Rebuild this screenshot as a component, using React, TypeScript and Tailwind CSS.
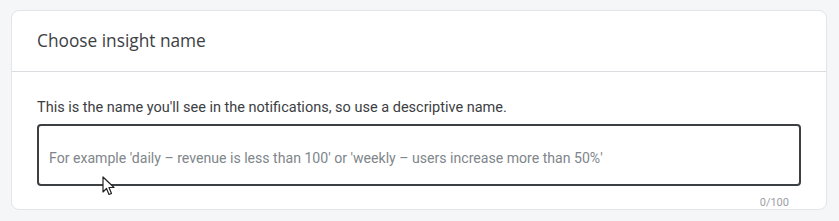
export default function App() {
  return (
    <div className="w-[839px] h-[221px] bg-[#f5f6f8] pt-[10px] pl-[11px] pr-[12px] relative" style={{ fontFamily: 'Roboto, "Open Sans", sans-serif' }}>
      <div className="bg-white border border-[#e3e5e8] rounded-[8px] h-[200px]">
        <div className="h-[61px] border-b border-[#dadce0] flex items-center px-[25px]">
          <h2 className="text-[17.3px] text-[#3c4043] leading-none" style={{ fontFamily: '"Open Sans", Roboto, sans-serif' }}>
            Choose insight name
          </h2>
        </div>
        <div className="px-[25px] pt-[26px]">
          <p className="text-[14.5px] text-[#3c4043] leading-[20px]">
            This is the name you'll see in the notifications, so use a descriptive name.
          </p>
          <div className="mt-[6px] w-[764px] h-[62px] border-2 border-[#3c4043] rounded-[4px] flex items-center pl-[10px] pt-[8px]">
            <span className="text-[14.1px] text-[#80868b]">
              For example 'daily – revenue is less than 100' or 'weekly – users increase more than 50%'
            </span>
          </div>
          <div className="w-[764px] flex justify-end pr-[12px] mt-[11px]">
            <span className="text-[11px] text-[#9aa0a6] leading-none">0/100</span>
          </div>
        </div>
      </div>
      <svg className="absolute left-[102px] top-[176px]" width="14" height="20" viewBox="0 0 14 20">
        <path d="M1 1 L1 16 L4.5 12.5 L7 18.5 L9.5 17.5 L7 11.5 L12 11.5 Z" fill="white" stroke="#222" strokeWidth="1.2" strokeLinejoin="round" />
      </svg>
    </div>
  );
}
